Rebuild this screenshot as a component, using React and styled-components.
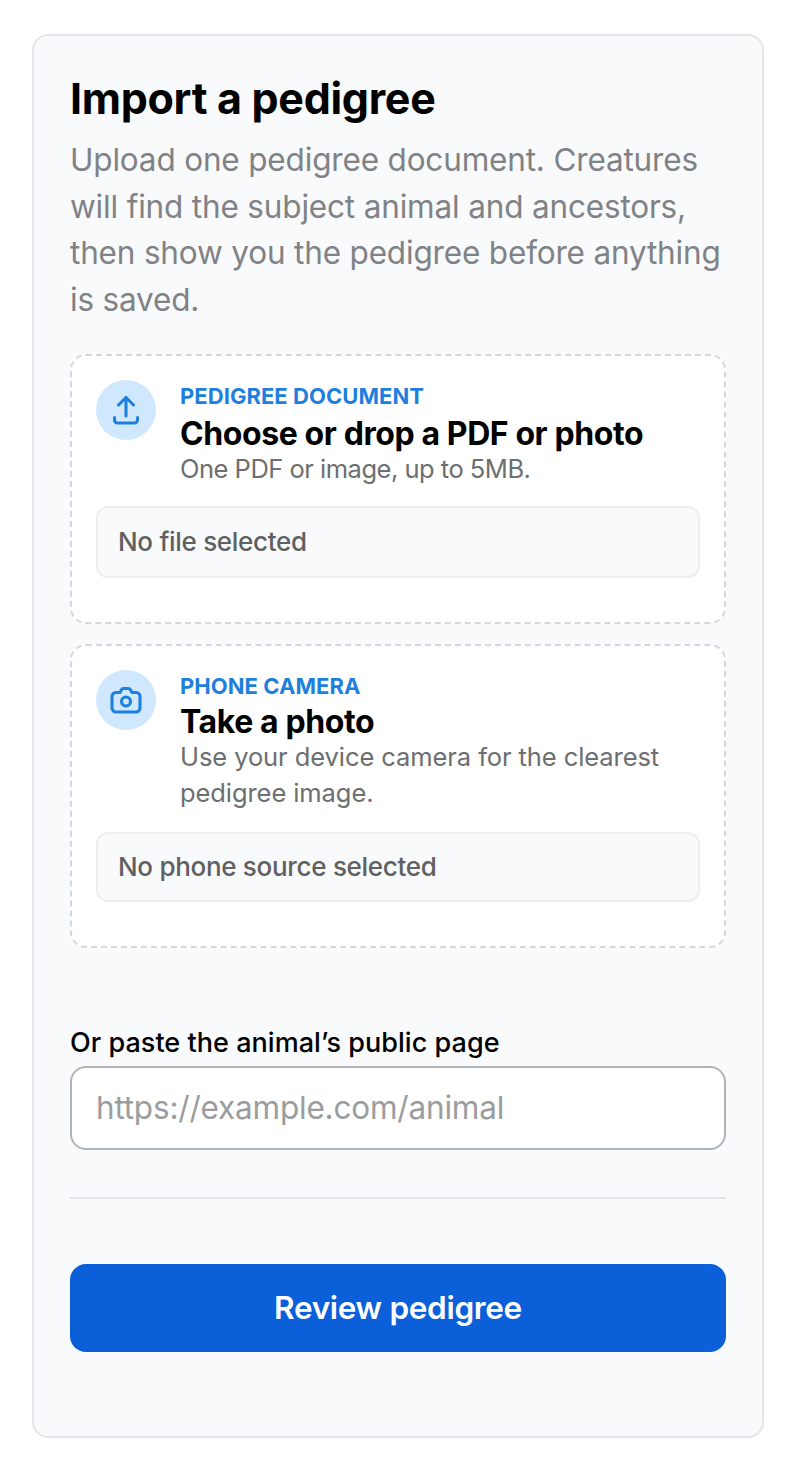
import React from 'react'
import styled, { createGlobalStyle } from 'styled-components'

const Global = createGlobalStyle`
  * { box-sizing: border-box; }
  html, body { margin: 0; background: #fff; }
  body { font-family: Inter, "Noto Sans", sans-serif; color: #000; }
`

const Page = styled.div`
  padding: 34px 32px;
`

const Card = styled.section`
  height: 1404px;
  padding: 34px 36px 0;
  background: #f9fafc;
  border: 2px solid #e2e5e9;
  border-radius: 16px;
`

const Title = styled.h1`
  margin: 0;
  font-size: 43px;
  line-height: 56px;
  font-weight: 700;
  letter-spacing: -0.3px;
`

const Intro = styled.p`
  margin: 11px 0 30px;
  font-size: 31.5px;
  line-height: 46.7px;
  letter-spacing: -0.17px;
  color: #808285;
`

const Sources = styled.div`
  display: flex;
  flex-direction: column;
  gap: 20px;
`

const Source = styled.div`
  height: ${p => p.$height}px;
  padding: 24px;
  background: #fff;
  border: 2px dashed #d5d7da;
  border-radius: 16px;
`

const SourceHead = styled.div`
  display: flex;
  gap: 24px;
`

const IconCircle = styled.div`
  flex: none;
  width: 60px;
  height: 60px;
  display: grid;
  place-items: center;
  border-radius: 50%;
  background: #d0e8fd;
  color: #1f7fdd;
`

const SourceText = styled.div`
  min-width: 0;
`

const Eyebrow = styled.div`
  font-size: 22px;
  line-height: 32px;
  font-weight: 700;
  letter-spacing: 0.05px;
  color: #1f7fdd;
`

const SourceTitle = styled.div`
  margin-top: ${p => p.$top}px;
  font-size: 32px;
  line-height: 34px;
  font-weight: 700;
  letter-spacing: -0.4px;
`

const SourceHint = styled.div`
  font-size: 25.5px;
  line-height: 36px;
  letter-spacing: ${p => p.$spacing}px;
  color: #6c6e6f;
`

const Selection = styled.div`
  height: ${p => p.$height}px;
  margin-top: ${p => p.$top}px;
  display: flex;
  align-items: center;
  padding: 0 20px;
  background: #f9fafc;
  border: 2px solid #eceef0;
  border-radius: 12px;
  font-size: 26px;
  font-weight: 500;
  letter-spacing: -0.3px;
  color: #5e6062;
`

const Field = styled.label`
  display: block;
  margin-top: 77px;
`

const FieldLabel = styled.span`
  display: block;
  font-size: 27px;
  line-height: 36px;
  font-weight: 500;
  letter-spacing: 0.04px;
  margin-bottom: 5px;
`

const UrlInput = styled.input`
  display: block;
  width: 100%;
  height: 84px;
  padding: 0 24px;
  background: #fff;
  border: 2px solid #afb4b9;
  border-radius: 16px;
  font: 400 31.5px Inter, sans-serif;
  letter-spacing: -0.2px;
  &::placeholder { color: #9a9da0; opacity: 1; }
`

const Divider = styled.hr`
  margin: 47px 0 65px;
  border: 0;
  border-top: 2px solid #e2e5e9;
`

const SubmitButton = styled.button`
  display: block;
  width: 100%;
  height: 88px;
  border: 0;
  border-radius: 16px;
  background: #0b5fd8;
  color: #fff;
  font: 600 31.5px Inter, sans-serif;
  letter-spacing: -0.3px;
`

const UploadIcon = () => (
  <svg width="32" height="32" viewBox="0 0 32 32" fill="none" stroke="currentColor" strokeWidth="3.1" strokeLinecap="round" strokeLinejoin="round">
    <path d="M16 22V4" />
    <path d="M8.500 11L16 3.500 23.500 11" />
    <path d="M4.500 23.500v2.500a3 3 0 0 0 3 3h17a3 3 0 0 0 3-3v-2.500" />
  </svg>
)

const CameraIcon = () => (
  <svg width="32" height="32" viewBox="0 0 32 32" fill="none" stroke="currentColor" strokeWidth="3.1" strokeLinecap="round" strokeLinejoin="round">
    <path d="M10 8.500l1.200-2.400A3 3 0 0 1 14 4.500h4a3 3 0 0 1 2.700 1.600L22 8.500h4a4 4 0 0 1 4 4V24a4 4 0 0 1-4 4H6a4 4 0 0 1-4-4V12.500a4 4 0 0 1 4-4z" />
    <circle cx="16" cy="17.500" r="4.500" />
  </svg>
)

const App = () => (
  <Page>
    <Global />
    <Card>
      <Title>Import a pedigree</Title>
      <Intro>Upload one pedigree document. Creatures will find the subject animal and ancestors, then show you the pedigree before anything is saved.</Intro>
      <Sources>
        <Source $height={270}>
          <SourceHead>
            <IconCircle><UploadIcon /></IconCircle>
            <SourceText>
              <Eyebrow>PEDIGREE DOCUMENT</Eyebrow>
              <SourceTitle $top={5}>Choose or drop a PDF or photo</SourceTitle>
              <SourceHint $spacing={-0.5}>One PDF or image, up to 5MB.</SourceHint>
            </SourceText>
          </SourceHead>
          <Selection $height={72} $top={19}>No file selected</Selection>
        </Source>
        <Source $height={304}>
          <SourceHead>
            <IconCircle><CameraIcon /></IconCircle>
            <SourceText>
              <Eyebrow>PHONE CAMERA</Eyebrow>
              <SourceTitle $top={3}>Take a photo</SourceTitle>
              <SourceHint $spacing={-0.08}>Use your device camera for the clearest pedigree image.</SourceHint>
            </SourceText>
          </SourceHead>
          <Selection $height={70} $top={21}>No phone source selected</Selection>
        </Source>
      </Sources>
      <Field>
        <FieldLabel>Or paste the animal’s public page</FieldLabel>
        <UrlInput placeholder="https://example.com/animal" />
      </Field>
      <Divider />
      <SubmitButton>Review pedigree</SubmitButton>
    </Card>
  </Page>
)

export default App
